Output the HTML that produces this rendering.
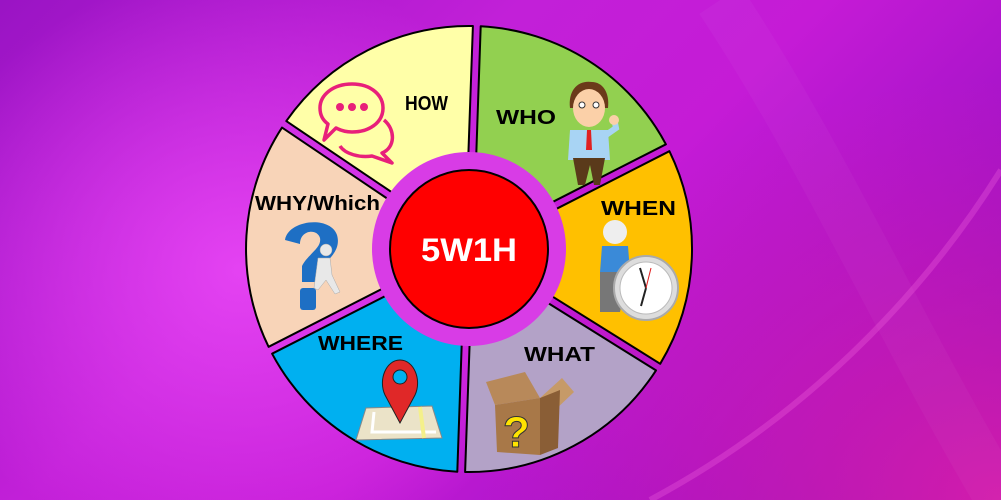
<!DOCTYPE html>
<html><head><meta charset="utf-8"><style>
html,body{margin:0;padding:0}
body{width:1001px;height:500px;overflow:hidden;position:relative;
background:
radial-gradient(ellipse 330px 300px at 240px 270px, rgba(232,70,245,0.9), rgba(232,70,245,0) 100%),
radial-gradient(ellipse 520px 420px at 1000px 500px, rgba(225,30,170,0.85), rgba(225,30,170,0) 100%),
linear-gradient(135deg,#9a14c4 0%,#c220d8 35%,#c51bd6 55%,#a012c6 80%,#8010b8 100%);}
svg{position:absolute;left:0;top:0}
text{font-family:"Liberation Sans",sans-serif;font-weight:bold}
</style></head><body>
<svg width="1001" height="500" viewBox="0 0 1001 500">
<path d="M720,0 C820,150 900,330 1001,500" stroke="rgba(255,255,255,0.03)" stroke-width="50" fill="none"/>
<path d="M650,500 C800,420 920,300 1001,170" stroke="rgba(255,120,230,0.25)" stroke-width="6" fill="none"/>
<g stroke="#000" stroke-width="2" stroke-linejoin="round">
<path d="M396.6,195.5 L286.3,121.1 A223,223 0 0 1 472.9,26 L468.2,159 Z" fill="#ffffa8"/>
<path d="M476.1,159.3 L480.7,26.3 A223,223 0 0 1 665.9,144.3 L547.3,204.7 Z" fill="#92d050"/>
<path d="M550.9,211.7 L669.4,151.2 A223,223 0 0 1 660.2,363.8 L547.3,293.3 Z" fill="#ffc000"/>
<path d="M543.2,300 L656,370.4 A223,223 0 0 1 465.1,472 L469.8,339 Z" fill="#b3a2c7"/>
<path d="M461.9,338.7 L457.3,471.7 A223,223 0 0 1 272.1,353.7 L390.7,293.3 Z" fill="#00b0f0"/>
<path d="M387.1,286.3 L268.6,346.8 A223,223 0 0 1 282,127.6 L392.3,202 Z" fill="#f8d4b8"/>
</g>
<circle cx="469" cy="249" r="97" fill="#d83ce6"/>
<circle cx="469" cy="249" r="79" fill="#ff0000" stroke="#000" stroke-width="2"/>
<text x="469" y="261" text-anchor="middle" font-size="32" fill="#fff" textLength="96" lengthAdjust="spacingAndGlyphs">5W1H</text>
<text x="405" y="110" font-size="20" fill="#000" textLength="43" lengthAdjust="spacingAndGlyphs">HOW</text>
<text x="496" y="124" font-size="20" fill="#000" textLength="60" lengthAdjust="spacingAndGlyphs">WHO</text>
<text x="601" y="215" font-size="20" fill="#000" textLength="75" lengthAdjust="spacingAndGlyphs">WHEN</text>
<text x="255" y="210" font-size="20" fill="#000" textLength="125" lengthAdjust="spacingAndGlyphs">WHY/Which</text>
<text x="318" y="350" font-size="20" fill="#000" textLength="85" lengthAdjust="spacingAndGlyphs">WHERE</text>
<text x="524" y="361" font-size="20" fill="#000" textLength="71" lengthAdjust="spacingAndGlyphs">WHAT</text>
<!-- chat bubbles -->
<g fill="none" stroke="#e8207a" stroke-width="3.5" stroke-linejoin="round">
<path d="M384,120 C396,130 395,148 382,153 L392,163 L372,156 C360,158 345,154 340,146"/>
<path d="M352,84 C372,84 383,96 383,108 C383,122 370,132 352,132 C345,132 340,130 336,128 L324,140 L328,124 C321,119 320,113 320,108 C320,95 333,84 352,84 Z"/>
</g>
<g fill="#e8207a"><circle cx="340" cy="107" r="4"/><circle cx="352" cy="107" r="4"/><circle cx="364" cy="107" r="4"/></g>
<!-- person WHO -->
<g>
<path d="M570,108 C568,90 578,80 592,82 C602,82 610,92 608,108 Z" fill="#6b3a1a"/>
<ellipse cx="589" cy="108" rx="16" ry="19" fill="#fbd0a8"/>
<circle cx="582" cy="105" r="3" fill="#fff" stroke="#333"/><circle cx="596" cy="105" r="3" fill="#fff" stroke="#333"/>
<path d="M570,130 L608,130 L610,160 L568,160 Z" fill="#a8d4f4"/>
<path d="M606,135 L616,128 L614,118" stroke="#a8d4f4" stroke-width="6" fill="none"/>
<circle cx="614" cy="120" r="5" fill="#fbd0a8"/>
<path d="M587,130 L591,130 L592,150 L586,150 Z" fill="#e02020"/>
<path d="M573,158 L605,158 L600,185 L594,185 L590,165 L585,185 L578,185 Z" fill="#5a3a1a"/>
</g>
<!-- WHEN figure + clock -->
<g>
<circle cx="615" cy="232" r="12" fill="#eee"/>
<path d="M602,246 L628,246 L630,272 L600,272 Z" fill="#3a8ad8"/>
<path d="M600,272 L628,272 L620,312 L600,312 Z" fill="#777"/>
<circle cx="646" cy="288" r="32" fill="#ddd" stroke="#aaa" stroke-width="2"/>
<circle cx="646" cy="288" r="26" fill="#fff" stroke="#bbb"/>
<path d="M646,288 L640,268 M646,288 L641,306" stroke="#222" stroke-width="2"/>
<path d="M646,288 L651,268" stroke="#e02020" stroke-width="1"/>
</g>
<!-- WHY question mark -->
<g fill="#1e6fc4">
<path d="M285,240 C288,220 330,215 337,235 C342,252 325,262 318,270 L318,282 L302,282 L302,266 C308,254 322,248 320,238 C317,228 300,230 300,244 Z"/>
<rect x="300" y="288" width="16" height="22" rx="3"/>
</g>
<g fill="#e8e8e8" stroke="#aaa" stroke-width="0.5">
<circle cx="326" cy="250" r="6"/>
<path d="M318,258 L330,258 L332,275 L340,292 L335,294 L326,280 L318,290 L314,288 Z"/>
</g>
<!-- map & pin -->
<path d="M366,408 L432,406 L442,438 L356,440 Z" fill="#ebe3c8" stroke="#888" stroke-width="1"/>
<path d="M374,412 L372,432 L436,432" stroke="#fff" stroke-width="3" fill="none"/>
<path d="M420,407 L424,438" stroke="#f4f08a" stroke-width="4"/>
<path d="M400,423 L385,395 C378,380 386,360 400,360 C414,360 422,380 415,395 Z" fill="#e02828" stroke="#222" stroke-width="1"/>
<circle cx="400" cy="377" r="7" fill="#00b0f0" stroke="#222"/>
<!-- box -->
<path d="M486,382 L525,372 L540,398 L495,405 Z" fill="#b8895a"/>
<path d="M540,398 L562,378 L574,392 L553,412 Z" fill="#c69a68"/>
<path d="M495,405 L540,398 L540,455 L497,452 Z" fill="#a87848"/>
<path d="M540,398 L560,390 L558,448 L540,455 Z" fill="#8a5e36"/>
<text x="503" y="447" font-size="44" fill="#ffe400" stroke="#333" stroke-width="1">?</text>
</svg>
</body></html>
